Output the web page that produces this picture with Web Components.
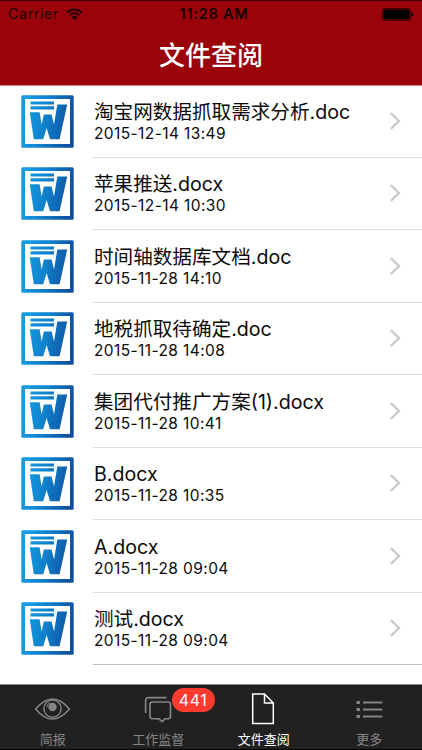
<!DOCTYPE html>
<html lang="zh-CN">
<head>
<meta charset="UTF-8">
<meta name="viewport" content="width=device-width, initial-scale=1.0">
<title>文件查阅</title>
<style>
  body {
    margin: 0;
    background: #fff;
    font-family: Inter, 'Noto Sans CJK SC', sans-serif;
  }
</style>
</head>
<body>
<file-app>
  <status-bar slot="header" carrier="Carrier" time="11:28 AM"></status-bar>
  <nav-title slot="header">文件查阅</nav-title>

  <file-row date="2015-12-14 13:49">淘宝网数据抓取需求分析.doc</file-row>
  <file-row date="2015-12-14 10:30">苹果推送.docx</file-row>
  <file-row date="2015-11-28 14:10">时间轴数据库文档.doc</file-row>
  <file-row date="2015-11-28 14:08">地税抓取待确定.doc</file-row>
  <file-row date="2015-11-28 10:41">集团代付推广方案(1).docx</file-row>
  <file-row date="2015-11-28 10:35">B.docx</file-row>
  <file-row date="2015-11-28 09:04">A.docx</file-row>
  <file-row date="2015-11-28 09:04" last>测试.docx</file-row>

  <tab-item slot="tabs" icon="eye">简报</tab-item>
  <tab-item slot="tabs" icon="chat" badge="441">工作监督</tab-item>
  <tab-item slot="tabs" icon="file" active>文件查阅</tab-item>
  <tab-item slot="tabs" icon="list">更多</tab-item>
</file-app>

<script>
class FileApp extends HTMLElement {
  connectedCallback() {
    this.attachShadow({ mode: 'open' });
    this.shadowRoot.innerHTML = `
      <style>
        :host {
          display: flex;
          flex-direction: column;
          height: 750px;
          overflow: hidden;
        }
        header {
          flex: none;
          box-sizing: border-box;
          height: 86px;
          background: #9a030a;
          border-top: 1px solid #4b0003;
          border-bottom: 1px solid #dc8a8d;
        }
        main {
          flex: 1;
          min-height: 0;
          margin-top: -1px;
        }
        footer {
          flex: none;
          box-sizing: border-box;
          height: 66px;
          display: grid;
          grid-template-columns: repeat(4, 1fr);
          background: #212121;
          border-top: 1px solid #858585;
          border-bottom: 1px solid #000;
        }
      </style>
      <header><slot name="header"></slot></header>
      <main><slot></slot></main>
      <footer><slot name="tabs"></slot></footer>
    `;
  }
}
customElements.define('file-app', FileApp);

class StatusBar extends HTMLElement {
  connectedCallback() {
    this.attachShadow({ mode: 'open' });
    this.shadowRoot.innerHTML = `
      <style>
        :host {
          display: grid;
          grid-template-columns: 1fr auto 1fr;
          align-items: center;
          height: 27px;
          padding: 0 8px;
          font-size: 14.6px;
          line-height: 27px;
          color: #240002;
        }
        .left {
          display: flex;
          align-items: center;
          gap: 7px;
          letter-spacing: 0.4px;
        }
        .time {
          padding-left: 6px;
          font-weight: 600;
          letter-spacing: 0.7px;
          color: #160001;
        }
        .battery {
          justify-self: end;
        }
        svg {
          display: block;
        }
      </style>
      <div class="left">
        <span>${this.getAttribute('carrier')}</span>
        <svg width="17" height="13" viewBox="0 0 17 13" fill="none" stroke="currentColor" stroke-width="2">
          <path d="M1.2 4.6a10.4 10.4 0 0 1 14.6 0M3.8 7.3a6.7 6.7 0 0 1 9.4 0"/>
          <path d="M8.5 12.2 5.7 9.4a4 4 0 0 1 5.6 0z" fill="currentColor" stroke="none"/>
        </svg>
      </div>
      <span class="time">${this.getAttribute('time')}</span>
      <svg class="battery" width="32" height="13" viewBox="0 0 32 13">
        <rect x="0.5" y="0.5" width="28" height="12" rx="2" fill="none" stroke="#3d0002"/>
        <rect x="1.5" y="1.5" width="26" height="10" rx="1" fill="#000"/>
        <path d="M29.5 4.2q2 .6 2 2.3t-2 2.3z" fill="#100"/>
      </svg>
    `;
  }
}
customElements.define('status-bar', StatusBar);

class NavTitle extends HTMLElement {
  connectedCallback() {
    this.attachShadow({ mode: 'open' });
    this.shadowRoot.innerHTML = `
      <style>
        :host {
          display: flex;
          justify-content: center;
          align-items: center;
          height: 56px;
          color: #fff;
          font-size: 26px;
          font-weight: 500;
          line-height: 56px;
        }
      </style>
      <slot></slot>
    `;
  }
}
customElements.define('nav-title', NavTitle);

class FileRow extends HTMLElement {
  connectedCallback() {
    this.attachShadow({ mode: 'open' });
    this.shadowRoot.innerHTML = `
      <style>
        :host {
          display: flex;
          align-items: center;
          height: 72.5px;
          padding-left: 21px;
          color: #0a0a0a;
        }
        .icon {
          flex: none;
          margin-right: 19px;
        }
        .body {
          flex: 1;
          align-self: stretch;
          box-sizing: border-box;
          display: flex;
          align-items: center;
          justify-content: space-between;
          padding-right: 21px;
          border-bottom: 1px solid #dcdcde;
        }
        :host([last]) .body {
          border-bottom-color: #bfbfc1;
        }
        .text {
          padding: 1px 0 0 1px;
          white-space: nowrap;
        }
        .name {
          font-size: 19.6px;
          line-height: 24px;
        }
        .date {
          font-size: 15.5px;
          line-height: 19px;
          letter-spacing: 0.4px;
        }
        svg {
          display: block;
        }
      </style>
      <svg class="icon" width="53" height="53" viewBox="0 0 53 53">
        <defs>
          <linearGradient id="blue" gradientUnits="userSpaceOnUse" x1="4" y1="26" x2="50" y2="34">
            <stop offset="0" stop-color="#149be2"/>
            <stop offset="0.4" stop-color="#0f83cd"/>
            <stop offset="1" stop-color="#0f4f9f"/>
          </linearGradient>
        </defs>
        <rect x="0.3" y="0.3" width="52.4" height="52.4" rx="1.5" fill="url(#blue)"/>
        <rect x="4" y="4" width="45" height="45" rx="0.5" fill="#fff"/>
        <g fill="url(#blue)">
          <path d="M9.5 6.6H33V9.6H9.5zM9.5 11.2H33V14.6H9.5z"/>
          <path d="M8.7 17.3H18.6L20.6 29.5L22.8 19.5H30.6L33 29.5L36.3 9.5H46.2L38.6 44.3H29L25.6 33L22.2 44.3H12.8z"/>
        </g>
      </svg>
      <div class="body">
        <div class="text">
          <div class="name"><slot></slot></div>
          <div class="date">${this.getAttribute('date')}</div>
        </div>
        <svg width="12" height="20" viewBox="0 0 12 20" fill="none" stroke="#c7c7cc" stroke-width="2.2">
          <path d="M1.8 2 10 10 1.8 18"/>
        </svg>
      </div>
    `;
  }
}
customElements.define('file-row', FileRow);

const TAB_ICONS = {
  eye: `
    <path d="M2.6 20Q19.5 0 36.4 20Q19.5 40 2.6 20z" stroke-width="1.5"/>
    <circle cx="19.5" cy="19.7" r="8.6" stroke-width="1.4"/>
    <circle cx="19.5" cy="18" r="4.2" fill="currentColor" stroke="none"/>
    <path d="M13.8 18.5a5.8 5.8 0 0 1 3.2-5" stroke-width="1"/>`,
  chat: `
    <path d="M6.6 24V11.3a2.7 2.7 0 0 1 2.7-2.7H27.5" stroke-width="1.6"/>
    <path d="M13.5 13H29a2.5 2.5 0 0 1 2.5 2.5V27.3a2.5 2.5 0 0 1-2.5 2.5H26L23 32.6L20 29.8H13.5a2.5 2.5 0 0 1-2.5-2.5V15.5a2.5 2.5 0 0 1 2.5-2.5z" stroke-width="1.6"/>`,
  file: `
    <path d="M8.7 5H20.5L29.3 14V34.5H8.7zM20.5 5V14H29.3" stroke-width="1.5"/>`,
  list: `
    <path d="M6.5 13.5h3.4M6.5 20.5h3.4M6.5 27.5h3.4" stroke-width="3.2"/>
    <path d="M13 13.5H32.4M13 20.5H32.4M13 27.5H32.4" stroke-width="2.2"/>`
};

class TabItem extends HTMLElement {
  connectedCallback() {
    const badge = this.getAttribute('badge');
    this.attachShadow({ mode: 'open' });
    this.shadowRoot.innerHTML = `
      <style>
        :host {
          display: flex;
          flex-direction: column;
          align-items: center;
          position: relative;
          padding-top: 4px;
          color: #858585;
        }
        :host([active]) {
          color: #fff;
        }
        svg {
          display: block;
        }
        .label {
          margin-top: 2px;
          font-size: 13px;
          line-height: 18px;
          white-space: nowrap;
        }
        .badge {
          position: absolute;
          left: 66px;
          top: 3px;
          width: 43px;
          height: 24px;
          border-radius: 12px;
          background: #ff3b30;
          color: #fff;
          font-size: 16px;
          line-height: 24px;
          letter-spacing: 0.5px;
          text-align: center;
        }
      </style>
      <svg width="39" height="39" viewBox="0 0 39 39" fill="none" stroke="currentColor">${TAB_ICONS[this.getAttribute('icon')]}</svg>
      <span class="label"><slot></slot></span>
      ${badge ? `<span class="badge">${badge}</span>` : ''}
    `;
  }
}
customElements.define('tab-item', TabItem);
</script>
</body>
</html>
